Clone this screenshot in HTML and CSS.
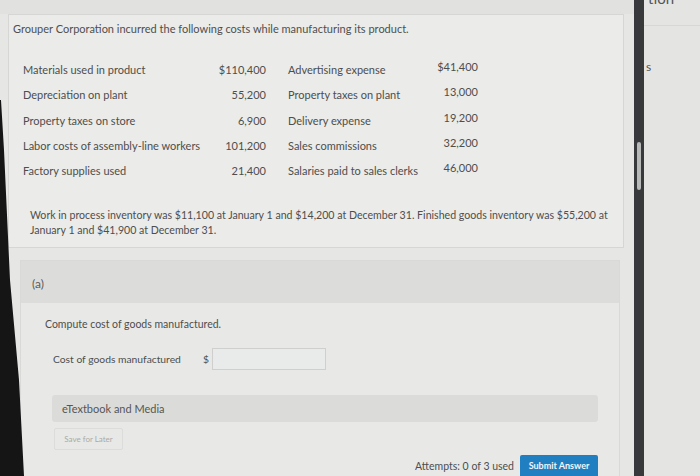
FILE: index.html
```html
<!DOCTYPE html>
<html>
<head>
<meta charset="utf-8">
<link rel="stylesheet" href="styles.css">
</head>
<body>
<div class="screen">
  <main class="main">
    <section class="problem">
      <p class="intro">Grouper Corporation incurred the following costs while manufacturing its product.</p>
      <div class="costs">
        <span class="lbl">Materials used in product</span><span class="amt">$110,400</span><span class="lbl2">Advertising expense</span><span class="amt2">$41,400</span>
        <span class="lbl">Depreciation on plant</span><span class="amt">55,200</span><span class="lbl2">Property taxes on plant</span><span class="amt2">13,000</span>
        <span class="lbl">Property taxes on store</span><span class="amt">6,900</span><span class="lbl2">Delivery expense</span><span class="amt2">19,200</span>
        <span class="lbl">Labor costs of assembly-line workers</span><span class="amt">101,200</span><span class="lbl2">Sales commissions</span><span class="amt2">32,200</span>
        <span class="lbl">Factory supplies used</span><span class="amt">21,400</span><span class="lbl2">Salaries paid to sales clerks</span><span class="amt2">46,000</span>
      </div>
      <p class="wip">Work in process inventory was $11,100 at January 1 and $14,200 at December 31. Finished goods inventory was $55,200 at January 1 and $41,900 at December 31.</p>
    </section>

    <section class="part">
      <div class="part-head">(a)</div>
      <div class="part-body">
        <p class="task">Compute cost of goods manufactured.</p>
        <div class="answer-row">
          <span class="answer-label">Cost of goods manufactured</span>
          <span class="dollar">$</span>
          <span class="answer-input"></span>
        </div>
        <div class="etext">eTextbook and Media</div>
        <div class="save">Save for Later</div>
        <div class="submit-row">
          <span class="attempts">Attempts: 0 of 3 used</span>
          <span class="submit">Submit Answer</span>
        </div>
      </div>
    </section>
  </main>
  <div class="scrollbar"><div class="thumb"></div></div>
  <aside class="side">
    <div class="side-top">tion</div>
    <div class="side-s">s</div>
  </aside>
</div>
<div class="edge"></div>
</body>
</html>
```
FILE: styles.css
```css
html, body {
  margin: 0;
  padding: 0;
}
body {
  width: 700px;
  height: 476px;
  overflow: hidden;
  background: #e3e4e2;
  font-family: Lato, "Open Sans", sans-serif;
  color: #4d4e4d;
  position: relative;
}
.screen {
  display: flex;
  height: 476px;
}
.main {
  width: 634px;
  padding-top: 14px;
  box-sizing: border-box;
  background: linear-gradient(#e1e2e0 0 14px, #e6e7e5 14px);
}
.problem {
  margin-left: 8px;
  width: 616px;
  height: 234px;
  box-sizing: border-box;
  border: 1px solid #d6d7d5;
  background: #ebebe9;
  padding: 6px 0 0 4px;
}
.intro {
  margin: 0;
  font-size: 11px;
  line-height: 15px;
  color: #4e4f4e;
}
.costs {
  display: grid;
  grid-template-columns: 160px 73px 140px 52px;
  column-gap: 10px;
  grid-auto-rows: 25.3px;
  align-items: center;
  margin: 21px 0 0 10px;
  font-size: 11px;
  white-space: nowrap;
}
.costs .amt, .costs .amt2 {
  text-align: right;
}
.costs .lbl2 {
  padding-left: 12px;
}
.costs .amt2 {
  position: relative;
  top: -3px;
}
.wip {
  margin: 25px 0 0 17px;
  width: 600px;
  font-size: 10.6px;
  line-height: 15px;
}
.part {
  margin: 12px 0 0 20px;
  width: 600px;
  height: 220px;
  border: 1px solid #d9dad8;
  border-bottom: 0;
  box-sizing: border-box;
  background: #e8e9e7;
}
.part-head {
  height: 42px;
  background: #dcdddb;
  font-size: 12px;
  line-height: 46px;
  padding-left: 11px;
  color: #5a5b5a;
}
.part-body {
  padding: 10px 0 0 31px;
}
.task {
  margin: 4px 0 0 -7px;
  font-size: 10.5px;
  line-height: 14px;
}
.answer-row {
  display: flex;
  align-items: center;
  margin: 17px 0 0 1px;
  font-size: 10.3px;
}
.answer-label {
  width: 150px;
}
.dollar {
  width: 9px;
}
.answer-input {
  width: 112px;
  height: 20px;
  border: 1px solid #cfd0ce;
  background: #e9eaea;
}
.etext {
  margin: 25px 0 0 0;
  width: 546px;
  height: 27px;
  box-sizing: border-box;
  background: #dbdcda;
  border-radius: 3px;
  font-size: 11px;
  line-height: 27px;
  padding-left: 10px;
  color: #555655;
}
.save {
  margin: 6px 0 0 2px;
  width: 69px;
  height: 22px;
  box-sizing: border-box;
  border: 1px solid #dcdcda;
  border-radius: 2px;
  font-size: 8px;
  line-height: 20px;
  text-align: center;
  color: #a9aaa8;
}
.submit-row {
  display: flex;
  justify-content: flex-end;
  align-items: center;
  gap: 6px;
  width: 546px;
  margin-top: 5px;
}
.attempts {
  font-size: 10.5px;
  color: #4d4e4d;
}
.submit {
  background: #1f7fc1;
  color: #f2f6fa;
  font-size: 9px;
  font-weight: 700;
  width: 78px;
  height: 21px;
  line-height: 21px;
  text-align: center;
  border-radius: 2px 2px 0 0;
}
.scrollbar {
  width: 10px;
  background: #38393a;
  padding-top: 142px;
  box-sizing: border-box;
}
.thumb {
  width: 4px;
  height: 48px;
  margin-left: 3px;
  background: #b8b9b9;
  border-radius: 2px;
}
.side {
  flex: 1;
  background: #e4e5e3;
  overflow: hidden;
}
.side-top {
  height: 33px;
  border-bottom: 1px solid #d7d8d6;
  box-sizing: border-box;
  font-size: 15px;
  line-height: 10px;
  margin-top: -7px;
  padding-left: 4px;
  color: #555;
}
.side-s {
  margin-top: 33px;
  padding-left: 2px;
  font-size: 12px;
  color: #555;
}
.edge {
  position: absolute;
  left: 0;
  top: 0;
  width: 30px;
  height: 476px;
  background: #151515;
  clip-path: polygon(0 100px, 1px 100px, 4px 150px, 10px 280px, 19px 380px, 24px 476px, 0 476px);
}
```
